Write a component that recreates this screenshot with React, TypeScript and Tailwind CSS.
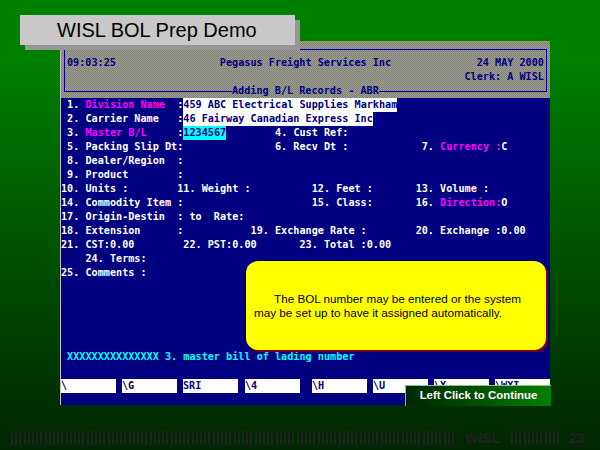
import type { ReactNode } from "react";

const fkeys = ["\\", "\\G", "SRI", "\\4", "\\H", "\\U", "\\X", "\\WXI"];

function Row({ children }: { children?: ReactNode }) {
  return <div className="h-3.5 leading-[14px] whitespace-pre">{children}</div>;
}

function Pink({ children }: { children: ReactNode }) {
  return <span className="text-[#ff00ff]">{children}</span>;
}

function Field({ children, cyan }: { children: ReactNode; cyan?: boolean }) {
  return (
    <span className={`inline-block h-3.5 align-top text-[#000080] ${cyan ? "bg-[#00ffff]" : "bg-white"}`}>
      {children}
    </span>
  );
}

function Bars({ width }: { width: string }) {
  return <div className={`h-full bg-[repeating-linear-gradient(90deg,#222222_0_2px,transparent_2px_4.2px)] ${width}`} />;
}

export default function App() {
  return (
    <div className="relative w-[600px] h-[450px] overflow-hidden pt-[41px] bg-gradient-to-b from-[#008000] from-[13%] to-[#002600] font-['Liberation_Sans',sans-serif]">
      {/* terminal capture */}
      <div className="relative ml-[60px] w-[490px] h-[364px] border-l border-[#c0c0c0] bg-[#000080] text-white font-['DejaVu_Sans_Mono',monospace] font-bold text-[10.17px]">
        <div className="h-[57px] pt-2 px-[3px] text-[#000080] bg-[repeating-conic-gradient(#a6a66e_0_25%,#78789c_0_50%)] bg-[length:2px_2px]">
          <div className="h-[43px] border-t border-x border-[#000080] pt-[6px] pl-[2px]">
            <Row>{"09:03:25                 Pegasus Freight Services Inc              24 MAY 2000"}</Row>
            <Row>{"                                                                 Clerk: A WISL"}</Row>
            <div className="flex items-center h-3.5 leading-[14px] ml-[-3px] mr-[-1px] whitespace-pre">
              <div className="w-[168px] h-px bg-[#000080]" />
              <span>Adding B/L Records - ABR</span>
              <div className="flex-1 h-px bg-[#000080]" />
            </div>
          </div>
        </div>

        <Row> 1. <Pink>Division Name</Pink>{"  :"}<Field>459 ABC Electrical Supplies Markham</Field></Row>
        <Row>{" 2. Carrier Name   :"}<Field>46 Fairway Canadian Express Inc</Field></Row>
        <Row> 3. <Pink>Master B/L</Pink>{"     :"}<Field cyan>1234567</Field>{"        4. Cust Ref:"}</Row>
        <Row>{" 5. Packing Slip Dt:               6. Recv Dt :            7. "}<Pink>Currency :</Pink>C</Row>
        <Row>{" 8. Dealer/Region  :"}</Row>
        <Row>{" 9. Product        :"}</Row>
        <Row>{"10. Units :        11. Weight :          12. Feet :       13. Volume :"}</Row>
        <Row>{"14. Commodity Item :                     15. Class:       16. "}<Pink>Direction:</Pink>O</Row>
        <Row>{"17. Origin-Destin  : to  Rate:"}</Row>
        <Row>{"18. Extension      :           19. Exchange Rate :        20. Exchange :0.00"}</Row>
        <Row>{"21. CST:0.00        22. PST:0.00       23. Total :0.00"}</Row>
        <Row>{"    24. Terms:"}</Row>
        <Row>{"25. Comments :"}</Row>
        <div className="h-[70px]" />
        <div className="text-[#00ffff]">
          <Row>{" XXXXXXXXXXXXXXX 3. master bill of lading number"}</Row>
        </div>
        <div className="h-[15px]" />

        <div className="flex h-3.5 leading-[14px] text-[#000080]">
          <div className="w-[55px] bg-white">{fkeys[0]}</div>
          <div className="w-[55px] ml-1.5 bg-white">{fkeys[1]}</div>
          <div className="w-[55px] ml-1.5 bg-white">{fkeys[2]}</div>
          <div className="w-[55px] ml-[7px] bg-white">{fkeys[3]}</div>
          <div className="w-[55px] ml-3 bg-white">{fkeys[4]}</div>
          <div className="w-[55px] ml-1.5 bg-white">{fkeys[5]}</div>
          <div className="w-[55px] ml-1.5 bg-white">{fkeys[6]}</div>
          <div className="w-[55px] ml-1.5 bg-white">{fkeys[7]}</div>
        </div>

        {/* callout */}
        <div className="absolute left-[185px] top-[220px] w-[300px] h-[89px] flex flex-col justify-center pl-2 rounded-xl bg-[#ffff00] shadow-[2px_2px_0_#800000] font-['Liberation_Sans',sans-serif] font-normal text-[11.7px] leading-[14px] text-black">
          <div className="pl-5">The BOL number may be entered or the system</div>
          <div>may be set up to have it assigned automatically.</div>
        </div>

        {/* continue button */}
        <div className="absolute right-[-1px] top-[344px] w-[146px] h-[21px] flex items-center justify-center bg-gradient-to-r from-[#002800] to-[#008000] border-t border-l border-[#8fbf8f] font-['Liberation_Sans',sans-serif] font-bold text-white text-[11.4px]">
          Left Click to Continue
        </div>
      </div>

      {/* slide title */}
      <div className="absolute left-5 top-[15px] w-[275px] h-[30px] pl-[37px] bg-[#c8c8c8] shadow-[5px_5px_0_#969696] text-[20px] leading-[30px] text-black">
        WISL BOL Prep Demo
      </div>

      {/* footer */}
      <div className="flex items-center h-3.5 mt-[26px] pl-[11px] text-[#222222] font-bold text-[14px]">
        <Bars width="w-[444px]" />
        <span className="ml-2.5">WISL</span>
        <Bars width="w-[49px] ml-[11px]" />
        <span className="ml-[9px]">23</span>
      </div>
    </div>
  );
}
